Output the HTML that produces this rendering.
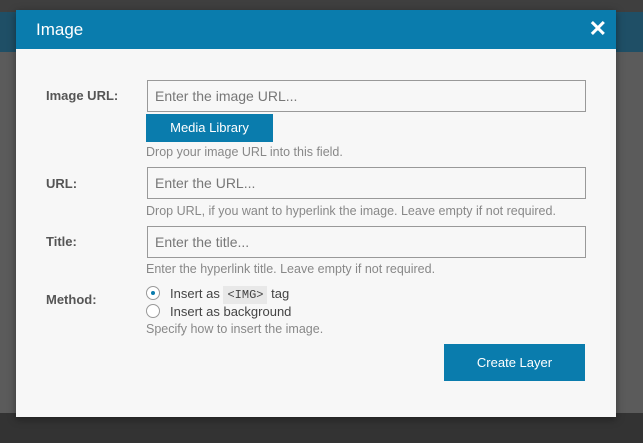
<!DOCTYPE html>
<html><head><style>
body{margin:0;width:643px;height:443px;overflow:hidden;background:#5b5b5b;font-family:"Liberation Sans",sans-serif;position:relative}
.top{position:absolute;left:0;top:0;width:643px;height:12px;background:#3f3f3f}
.bar{position:absolute;left:0;top:12px;width:643px;height:40px;background:#1f4f66}
.bot{position:absolute;left:0;top:413px;width:643px;height:30px;background:#333}
.m{position:absolute;left:16px;top:10px;width:600px;height:407px;background:#f7f7f7;box-shadow:0 2px 8px rgba(0,0,0,.4)}
.h{height:39px;background:#0a7cad;color:#fff;font-size:17px;line-height:39px;padding-left:20px}
.x{position:absolute;right:9px;top:6px;color:#fff;font-size:22px;font-weight:bold}
.a{position:absolute}
.l{font-size:13px;font-weight:bold;color:#555}
.in{position:absolute;left:131px;width:430px;height:30px;border:1px solid #999;background:#f7f7f7;font-size:14px;color:#777;line-height:30px;padding-left:7px;box-sizing:content-box}
.hl{position:absolute;left:130px;font-size:12.5px;color:#888}
.btn{position:absolute;background:#0a7cad;color:#fff;font-size:13px;text-align:center}
.r{position:absolute;left:130px;width:12px;height:12px;border:1px solid #999;border-radius:50%;background:#fff}
.t{position:absolute;left:154px;font-size:13px;color:#444}
code{font-family:"Liberation Mono",monospace;background:#e8e8e8;padding:2px 4px;font-size:12px}
</style></head><body>
<div class="top"></div><div class="bar"></div><div class="bot"></div>
<div class="m">
<div class="h">Image</div><div class="x">✕</div>
<div class="a l" style="left:30px;top:78px">Image URL:</div>
<div class="in" style="top:70px">Enter the image URL...</div>
<div class="btn" style="left:130px;top:104px;width:127px;height:28px;line-height:28px">Media Library</div>
<div class="hl" style="top:135px">Drop your image URL into this field.</div>
<div class="a l" style="left:30px;top:166px">URL:</div>
<div class="in" style="top:157px">Enter the URL...</div>
<div class="hl" style="top:194px">Drop URL, if you want to hyperlink the image. Leave empty if not required.</div>
<div class="a l" style="left:30px;top:224px">Title:</div>
<div class="in" style="top:216px">Enter the title...</div>
<div class="hl" style="top:252px">Enter the hyperlink title. Leave empty if not required.</div>
<div class="a l" style="left:30px;top:282px">Method:</div>
<div class="r" style="top:276px"><div style="width:4px;height:4px;border-radius:50%;background:#0a7cad;margin:4px"></div></div>
<div class="t" style="top:276px">Insert as <code>&lt;IMG&gt;</code> tag</div>
<div class="r" style="top:294px"></div>
<div class="t" style="top:294px">Insert as background</div>
<div class="hl" style="top:312px">Specify how to insert the image.</div>
<div class="btn" style="left:428px;top:334px;width:141px;height:37px;line-height:37px">Create Layer</div>
</div>
</body></html>
